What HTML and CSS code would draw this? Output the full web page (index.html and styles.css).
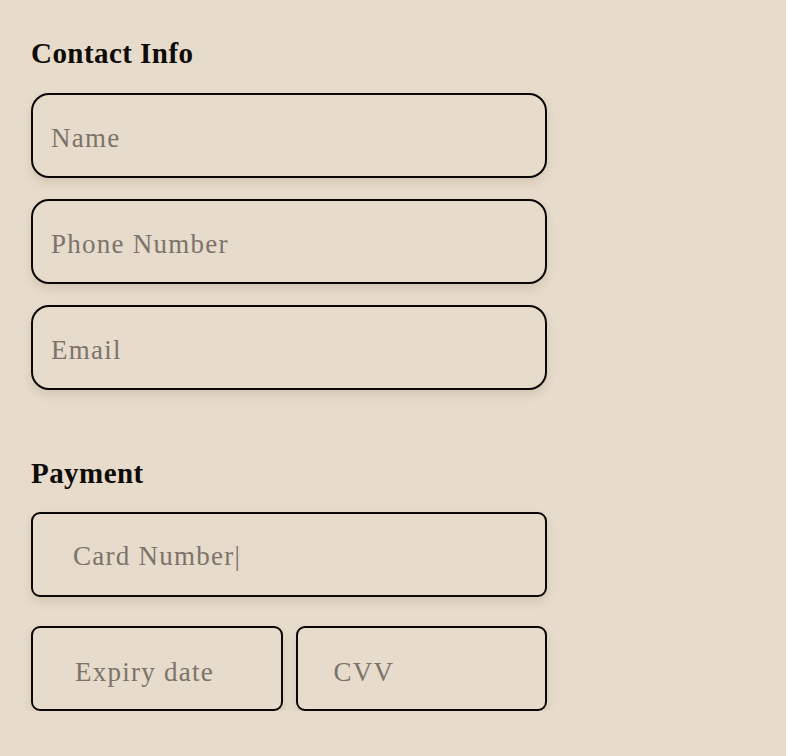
FILE: index.html
```html
<!DOCTYPE html>
<html lang="en">
<head>
<meta charset="utf-8">
<title>Checkout</title>
<link rel="stylesheet" href="styles.css">
</head>
<body>
<form class="form">
  <section class="section">
    <h2 class="heading">Contact Info</h2>
    <div class="fields">
      <input class="field field--round" type="text" placeholder="Name">
      <input class="field field--round" type="text" placeholder="Phone Number">
      <input class="field field--round" type="email" placeholder="Email">
    </div>
  </section>
  <section class="section section--payment">
    <h2 class="heading">Payment</h2>
    <input class="field field--square field--card" type="text" placeholder="Card Number|">
    <div class="pair">
      <input class="field field--square field--expiry" type="text" placeholder="Expiry date">
      <input class="field field--square field--cvv" type="text" placeholder="CVV">
    </div>
  </section>
</form>
</body>
</html>
```
FILE: styles.css
```css
html, body {
  margin: 0;
  padding: 0;
  background: #e7dbcb;
}
body {
  font-family: "Liberation Serif", "Times New Roman", serif;
  color: #111;
}
.form {
  width: 516px;
  padding: 39px 0 0 31px;
  display: flex;
  flex-direction: column;
}
.section {
  display: flex;
  flex-direction: column;
}
.section--payment {
  margin-top: 69px;
}
.heading {
  margin: 0 0 25px 0;
  font-size: 29px;
  line-height: 29px;
  font-weight: 700;
  letter-spacing: 0.45px;
  color: #0e0b08;
}
.section--payment .heading {
  margin-bottom: 24px;
}
.fields {
  display: flex;
  flex-direction: column;
  gap: 21px;
}
.field {
  box-sizing: border-box;
  width: 100%;
  height: 85px;
  margin: 0;
  border: 2px solid #0a0806;
  background: #e7dbcb;
  font-family: "Liberation Serif", "Times New Roman", serif;
  font-size: 27px;
  letter-spacing: 1.25px;
  color: #3a332c;
  padding: 5px 0 0 18px;
  outline: none;
  box-shadow: 0 5px 10px rgba(90, 70, 40, 0.13);
}
.field::placeholder {
  color: #7c736a;
  opacity: 1;
}
.field--round {
  border-radius: 18px;
}
.field--square {
  border-radius: 9px;
}
.field--card {
  padding-left: 40px;
  padding-top: 3px;
}
.pair {
  margin-top: 29px;
  display: grid;
  grid-template-columns: 1fr 1fr;
  gap: 13px;
}
.field--expiry {
  padding-left: 42px;
  padding-top: 8px;
}
.field--cvv {
  padding-left: 36px;
  padding-top: 8px;
}
```
